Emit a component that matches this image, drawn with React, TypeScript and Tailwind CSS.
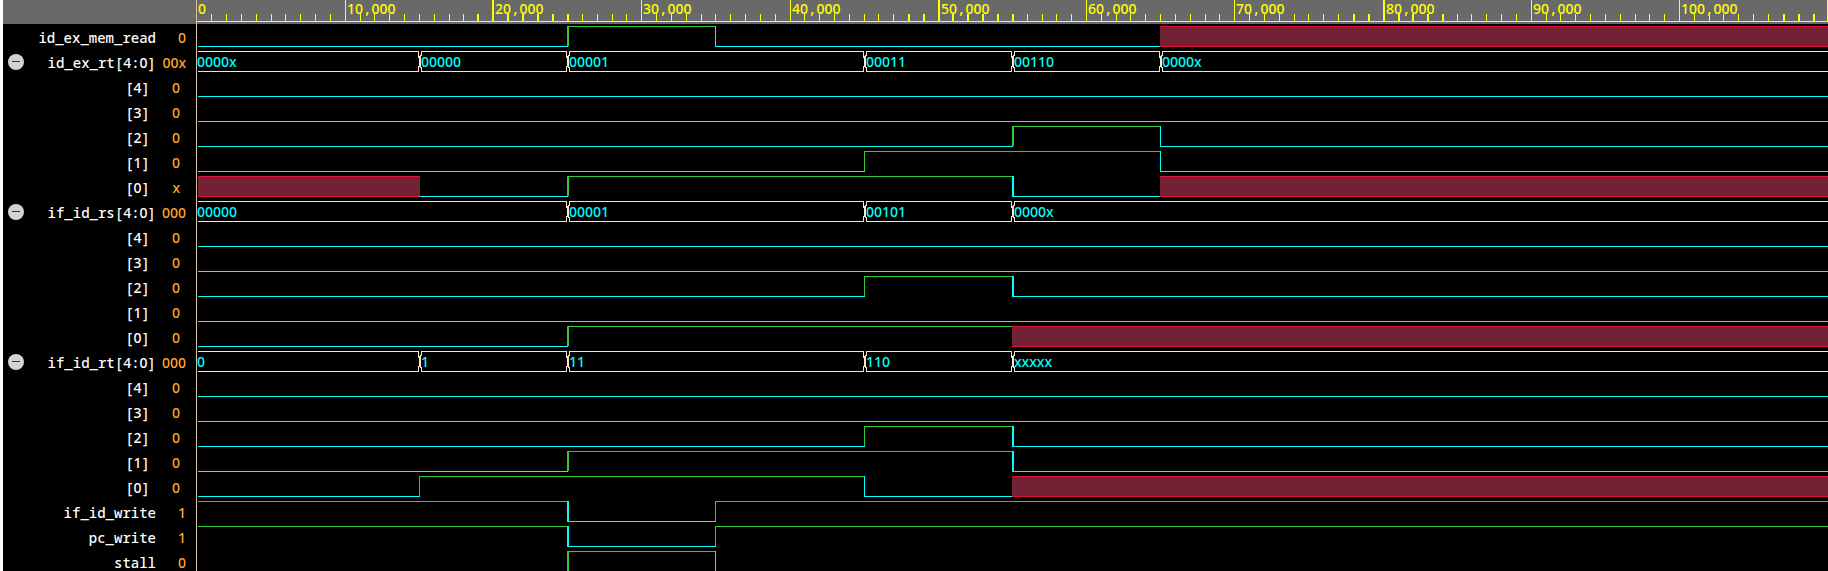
const MONO = "font-['Noto_Sans_Mono','DejaVu_Sans_Mono',monospace]";
const DIGITS = "font-['Noto_Sans','Open_Sans',sans-serif]";

const TICK = 14.825; // width of 1,000 time units
const FAR = 4000; // traces run on past the right edge of the window

type Level = '0' | '1' | 'x';
type Signal = {
  name: string;
  value: string;
  kind: 'wire' | 'bus' | 'bit';
  changes: [number, string][];
};

const flat: [number, string][] = [[0, '0']];
const bit = (n: number, changes: [number, string][] = flat, value = '0'): Signal => ({
  name: `[${n}]`,
  value,
  kind: 'bit',
  changes,
});

const signals: Signal[] = [
  { name: 'id_ex_mem_read', value: '0', kind: 'wire', changes: [[0, '0'], [25, '1'], [35, '0'], [65, 'x']] },
  {
    name: 'id_ex_rt[4:0]',
    value: '00x',
    kind: 'bus',
    changes: [[0, '0000x'], [15, '00000'], [25, '00001'], [45, '00011'], [55, '00110'], [65, '0000x']],
  },
  bit(4),
  bit(3),
  bit(2, [[0, '0'], [55, '1'], [65, '0']]),
  bit(1, [[0, '0'], [45, '1'], [65, '0']]),
  bit(0, [[0, 'x'], [15, '0'], [25, '1'], [55, '0'], [65, 'x']], 'x'),
  {
    name: 'if_id_rs[4:0]',
    value: '000',
    kind: 'bus',
    changes: [[0, '00000'], [25, '00001'], [45, '00101'], [55, '0000x']],
  },
  bit(4),
  bit(3),
  bit(2, [[0, '0'], [45, '1'], [55, '0']]),
  bit(1),
  bit(0, [[0, '0'], [25, '1'], [55, 'x']]),
  {
    name: 'if_id_rt[4:0]',
    value: '000',
    kind: 'bus',
    changes: [[0, '0'], [15, '1'], [25, '11'], [45, '110'], [55, 'xxxxx']],
  },
  bit(4),
  bit(3),
  bit(2, [[0, '0'], [45, '1'], [55, '0']]),
  bit(1, [[0, '0'], [25, '1'], [55, '0']]),
  bit(0, [[0, '0'], [15, '1'], [45, '0'], [55, 'x']]),
  { name: 'if_id_write', value: '1', kind: 'wire', changes: [[0, '1'], [25, '0'], [35, '1']] },
  { name: 'pc_write', value: '1', kind: 'wire', changes: [[0, '1'], [25, '0'], [35, '1']] },
  { name: 'stall', value: '0', kind: 'wire', changes: [[0, '0'], [25, '1'], [35, '0']] },
];

const WIDE: [number, number][] = [[19, 25], [48, 55], [78, 84], [107, 109]];
const isWide = (k: number) => WIDE.some(([a, b]) => k >= a && k <= b);
const xOf = (k: number) => (isWide(k) ? Math.floor(14.84 * k - 1) : Math.floor(TICK * k));
const widthOf = (k: number) => (isWide(k) ? 2 : 1);

const ticks = Array.from({ length: 260 }, (_, k) => k);
const labelled = [0, 10, 20, 30, 40, 50, 60, 70, 80, 90, 100];

function Ruler() {
  return (
    <svg className="block h-6 w-full min-w-0 flex-1" shapeRendering="crispEdges" aria-label="Time">
      <g className="fill-[#ffff00]">
        <rect x={0} y={21} width={FAR} height={1} />
        {ticks.slice(1).map((k) => {
          const top = k % 10 === 0 ? 0 : 14;
          return <rect key={k} x={xOf(k)} y={top} width={widthOf(k)} height={21 - top} />;
        })}
        {labelled.map((k) => (
          <text
            key={k}
            x={k === 0 ? 1 : xOf(k) + widthOf(k) + 1}
            y={14}
            className={`text-[14px] font-medium ${DIGITS}`}
          >
            {k === 0 ? (
              '0'
            ) : (
              <>
                {k}
                <tspan className={MONO}>,</tspan>
                000
              </>
            )}
          </text>
        ))}
      </g>
    </svg>
  );
}

function BusTrace({ changes }: { changes: [number, string][] }) {
  return (
    <>
      {changes.map(([t, label], i) => {
        const start = t === 0 ? 1 : xOf(t) + 2;
        const end = i + 1 < changes.length ? xOf(changes[i + 1][0]) : FAR;
        return (
          <g key={t}>
            <g className="fill-[#ffe4c4]">
              <rect x={start} y={2} width={end - start} height={1} />
              <rect x={start} y={22} width={end - start} height={1} />
              {t > 0 && (
                <>
                  <rect x={start - 3} y={2} width={1} height={7} />
                  <rect x={start - 2} y={7} width={1} height={11} />
                  <rect x={start - 3} y={17} width={1} height={6} />
                  <rect x={start} y={2} width={1} height={5} />
                  <rect x={start - 1} y={6} width={1} height={13} />
                  <rect x={start} y={18} width={1} height={5} />
                </>
              )}
            </g>
            <text
              x={t === 0 ? 0 : start}
              y={18}
              className={`fill-[#00ffff] text-[14px] font-medium ${DIGITS}`}
            >
              {label}
            </text>
          </g>
        );
      })}
    </>
  );
}

function WireTrace({ changes }: { changes: [number, string][] }) {
  return (
    <>
      {changes.map(([t, raw], i) => {
        const level = raw as Level;
        const start = t === 0 ? 1 : xOf(t);
        const next = changes[i + 1];
        const end = next ? xOf(next[0]) + 1 : FAR;
        if (level === 'x') {
          return (
            <g key={t}>
              <rect x={start} y={2} width={end - start} height={21} className="fill-[#722234]" />
              <rect x={start} y={2} width={end - start} height={1} className="fill-[#dc143c]" />
              <rect x={start} y={22} width={end - start} height={1} className="fill-[#dc143c]" />
            </g>
          );
        }
        const edge = t > 0 && changes[i - 1][1] !== 'x';
        return (
          <g key={t} className={level === '1' ? 'fill-[#32cd32]' : 'fill-[#00ffff]'}>
            <rect x={start} y={level === '1' ? 2 : 22} width={end - start} height={1} />
            {edge && <rect x={start} y={2} width={widthOf(t)} height={20} />}
          </g>
        );
      })}
    </>
  );
}

function Mixed({ text }: { text: string }) {
  return (
    <>
      {text.split(/(\d+)/).map((part, i) => (
        <span key={i} className={i % 2 ? DIGITS : ''}>
          {part}
        </span>
      ))}
    </>
  );
}

function Row({ signal }: { signal: Signal }) {
  const inset = signal.kind === 'bit' ? 'pr-1.5' : '';
  return (
    <div className="flex h-[25px] shrink-0">
      <div
        className={`flex w-[193px] shrink-0 items-center pl-[5px] pr-2.5 text-[14px] font-medium leading-[25px] ${MONO}`}
      >
        {signal.kind === 'bus' && (
          <button
            type="button"
            aria-label={`Collapse ${signal.name}`}
            className="flex size-4 shrink-0 items-center justify-center rounded-full bg-[#d3d3d3]"
          >
            <span className="h-px w-2 bg-[#333333]" />
          </button>
        )}
        <span className={`flex-1 whitespace-pre pt-0.5 text-right text-white ${inset}`}>
          <Mixed text={signal.name} />
        </span>
        <span className={`w-[30px] shrink-0 pt-0.5 text-right text-[#ffa726] ${inset} ${DIGITS}`}>
          {signal.value}
        </span>
      </div>
      <svg
        className="block h-[25px] w-full min-w-0 flex-1 border-l border-[#d2bfa4]"
        shapeRendering="crispEdges"
        role="img"
        aria-label={`${signal.name} waveform`}
      >
        {signal.kind === 'bus' ? <BusTrace changes={signal.changes} /> : <WireTrace changes={signal.changes} />}
      </svg>
    </div>
  );
}

export default function App() {
  return (
    <main className="flex h-screen flex-col overflow-hidden border-l-[3px] border-white bg-black">
      <header className="flex h-6 shrink-0 bg-[#696969]">
        <div className="w-[194px] shrink-0 border-r border-[#d2bfa4]" />
        <Ruler />
      </header>
      {signals.map((signal, i) => (
        <Row key={i} signal={signal} />
      ))}
    </main>
  );
}
